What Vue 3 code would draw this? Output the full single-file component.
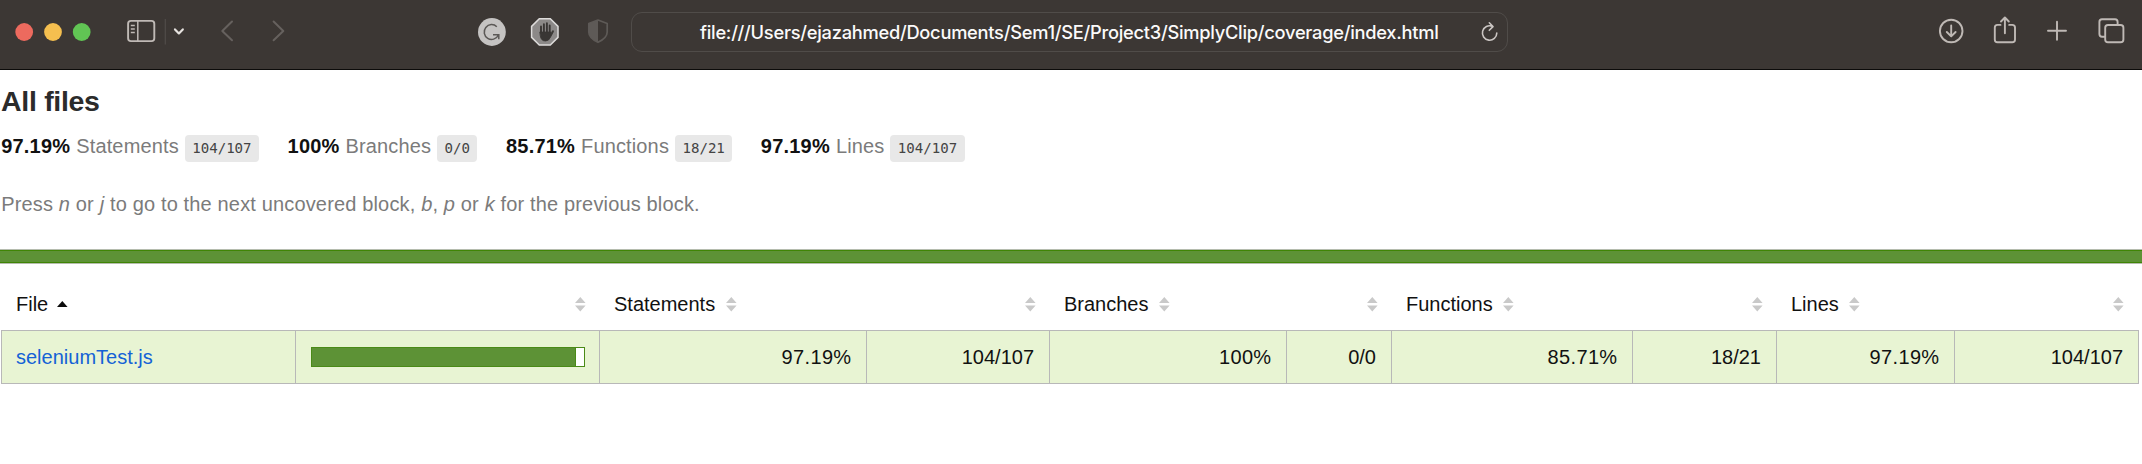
<script setup>
const metrics = [
  { pct: '97.19%', label: 'Statements', ratio: '104/107', key: 'statements' },
  { pct: '100%', label: 'Branches', ratio: '0/0', key: 'branches' },
  { pct: '85.71%', label: 'Functions', ratio: '18/21', key: 'functions' },
  { pct: '97.19%', label: 'Lines', ratio: '104/107', key: 'lines' },
]
const covered = 97
</script>

<template>
  <div class="window">
    <header class="toolbar">
      <div class="group left">
        <svg class="lights" width="80" height="68" viewBox="13 0 80 68">
          <circle cx="24.2" cy="32" r="8.9" fill="#ed6a5e" />
          <circle cx="53" cy="32" r="8.9" fill="#f5bf4f" />
          <circle cx="81.7" cy="32" r="8.9" fill="#61c554" />
        </svg>
        <svg width="64" height="68" viewBox="124 0 64 68" fill="none">
          <rect x="128.1" y="20.9" width="26.2" height="20.2" rx="2.8" stroke="#bfb9b5" stroke-width="1.9" />
          <path d="M137.8 21V41M130.8 25.4h4M130.8 29h4M130.8 32.5h4" stroke="#bfb9b5" stroke-width="1.5" />
          <path d="M165.3 19V44.5" stroke="#514c49" stroke-width="1.2" />
          <path d="M175 29.4L178.9 33.4L182.8 29.4" stroke="#e6e2df" stroke-width="2.2" stroke-linecap="round" stroke-linejoin="round" />
        </svg>
        <svg width="72" height="68" viewBox="217 0 72 68" fill="none" stroke="#66615e" stroke-width="2" stroke-linecap="round" stroke-linejoin="round">
          <path d="M232 21.5L222.3 31L232 40.3" />
          <path d="M273.6 21.5L283.3 31L273.6 40.3" />
        </svg>
      </div>

      <div class="group center">
        <svg width="136" height="68" viewBox="475 0 136 68" fill="none">
          <circle cx="491.9" cy="32" r="13.9" fill="#c5c3c2" />
          <path d="M496.8 26.7A7.4 7.4 0 1 0 498.3 35.2M493 34.7H498.8V39.2" stroke="#5b5856" stroke-width="1.5" />
          <path d="M539.3 18.7H550.3L558 26.4V37.4L550.3 45.1H539.3L531.6 37.4V26.4Z" fill="#8c8988" stroke="#dddbda" stroke-width="1.5" />
          <g stroke="#393634" stroke-linecap="round">
            <path d="M541 33V26.5M543.9 33V24.2M546.9 33V23.3M549.7 33V25.5" stroke-width="1.9" />
            <path d="M540.1 32H550.6V34.5L552.5 30.8Q553.8 30.3 553.5 31.6L550.6 37Q549 41 545.5 41Q541 41 540.3 36Z" fill="#393634" stroke-width="0.8" stroke-linejoin="round" />
          </g>
          <path d="M598 20L607.2 23.5V32Q607.2 38 598 42.3Q588.8 38 588.8 32V23.5Z" stroke="#5e5a57" stroke-width="1.7" stroke-linejoin="round" />
          <path d="M598 20V42.3Q588.8 38 588.8 32V23.5Z" fill="#5e5a57" />
        </svg>
        <div class="address">
          <span class="url">file:///Users/ejazahmed/Documents/Sem1/SE/Project3/SimplyClip/coverage/index.html</span>
          <svg class="reload" width="20" height="36" viewBox="1480 13 20 36" fill="none" stroke="#cbc6c3" stroke-width="1.6" stroke-linecap="round" stroke-linejoin="round">
            <path d="M1496.8 32A7.2 7.2 0 1 1 1492.3 25.3M1489.3 21.8L1493 25.6L1489.3 29.3" />
          </svg>
        </div>
      </div>

      <svg class="actions" width="190" height="68" viewBox="1936 0 190 68" fill="none" stroke="#bfb9b5" stroke-width="1.9" stroke-linecap="round" stroke-linejoin="round">
        <circle cx="1951.2" cy="31" r="11.3" />
        <path d="M1951.2 25.5V36.2M1946.8 32L1951.2 36.4L1955.6 32" />
        <path d="M2000.5 24.9H1997.5Q1994.8 24.9 1994.8 27.5V39.4Q1994.8 42.2 1997.5 42.2H2012.2Q2015 42.2 2015 39.4V27.5Q2015 24.9 2012.2 24.9H2009.2M2004.9 33.2V17.8M2001 21.5L2004.9 17.5L2008.8 21.5" />
        <path d="M2057 21.7V39.8M2048 30.7H2066" />
        <rect x="2105.2" y="25" width="18.2" height="17.3" rx="2.8" />
        <path d="M2104.5 36.7H2102Q2099.4 36.7 2099.4 34V22Q2099.4 19.3 2102 19.3H2115Q2117.6 19.3 2117.6 22V24.5" />
      </svg>
    </header>

    <main class="report">
      <h1>All files</h1>
      <div class="stats">
        <div v-for="m in metrics" :key="m.key" class="stat">
          <strong>{{ m.pct }}</strong>
          <span class="quiet">{{ m.label }}</span>
          <span class="fraction">{{ m.ratio }}</span>
        </div>
      </div>
      <p class="hint">Press <em>n</em> or <em>j</em> to go to the next uncovered block, <em>b</em>, <em>p</em> or <em>k</em> for the previous block.</p>
      <div class="status"></div>

      <div class="row head">
        <div class="th">File<svg class="sorter active" width="11" height="15" viewBox="0 0 11 15"><path d="M0 10L5.3 4L10.6 10Z" fill="#0b0b0b" /></svg></div>
        <div class="th end"><svg class="sorter" width="11" height="15" viewBox="0 0 11 15"><path d="M0 6L5.3 0L10.6 6ZM0 8.5H10.6L5.3 14.5Z" fill="#c9c9c9" /></svg></div>
        <template v-for="m in metrics" :key="m.key">
          <div class="th">{{ m.label }}<svg class="sorter" width="11" height="15" viewBox="0 0 11 15"><path d="M0 6L5.3 0L10.6 6ZM0 8.5H10.6L5.3 14.5Z" fill="#c9c9c9" /></svg></div>
          <div class="th end"><svg class="sorter" width="11" height="15" viewBox="0 0 11 15"><path d="M0 6L5.3 0L10.6 6ZM0 8.5H10.6L5.3 14.5Z" fill="#c9c9c9" /></svg></div>
        </template>
      </div>

      <div class="row body">
        <div class="td"><a class="file">seleniumTest.js</a></div>
        <div class="td pic">
          <div class="chart"><div class="fill" :style="{ width: covered + '%' }"></div></div>
        </div>
        <template v-for="m in metrics" :key="m.key">
          <div class="td num pct">{{ m.pct }}</div>
          <div class="td num">{{ m.ratio }}</div>
        </template>
      </div>
    </main>
  </div>
</template>

<style>
body {
  background: #fff;
}
</style>

<style scoped>
.window {
  width: 2142px;
  height: 464px;
  overflow: hidden;
  background: #fff;
  color: #111;
  font-family: "Liberation Sans", Arial, sans-serif;
  font-size: 20px;
}
svg {
  display: block;
  flex: none;
}
.toolbar {
  box-sizing: border-box;
  height: 70px;
  display: flex;
  justify-content: space-between;
  padding: 0 16px 0 13px;
  background: #3c3734;
  border-bottom: 1.5px solid #0c0b0a;
}
.group {
  display: flex;
}
.left {
  gap: 30px;
}
.left .lights {
  margin-right: 1px;
}
.left svg:last-child {
  margin-left: -1px;
}
.center {
  margin-right: 242px;
  gap: 20px;
}
.address {
  box-sizing: border-box;
  width: 877px;
  height: 40px;
  margin-top: 12px;
  border: 1.5px solid #504c49;
  border-radius: 11px;
  display: flex;
  align-items: center;
  padding: 0 7px 0 68px;
  justify-content: space-between;
}
.url {
  font-family: Inter, sans-serif;
  font-size: 18.3px;
  font-weight: 500;
  letter-spacing: -0.27px;
  color: #fbfafa;
  white-space: nowrap;
}
.report {
  padding-top: 13px;
}
h1 {
  margin: 0 0 0 1px;
  font-size: 28.5px;
  line-height: 36px;
  letter-spacing: -0.3px;
  color: #2b2b2b;
}
.stats {
  display: flex;
  gap: 28.6px;
  margin: 16px 0 0 1.2px;
}
.stat {
  display: flex;
  height: 27px;
  line-height: 23px;
  gap: 6px;
}
.stat strong {
  letter-spacing: 0.2px;
}
.quiet {
  letter-spacing: 0.14px;
  color: #7b7b7b;
}
.fraction {
  box-sizing: border-box;
  height: 27px;
  padding: 0 7.4px;
  border-radius: 4px;
  background: #e8e8e8;
  color: #444;
  font-family: "DejaVu Sans Mono", monospace;
  font-size: 14.1px;
  line-height: 27px;
}
.hint {
  margin: 30px 0 0 1.2px;
  line-height: 24px;
  letter-spacing: 0.155px;
  color: #7b7b7b;
}
.status {
  height: 11px;
  margin-top: 34px;
  background: #5d9236;
  border: solid #3f8505;
  border-width: 1px 0;
  box-shadow: 0 0 0 1px #b5bcae;
}
.row {
  display: grid;
  grid-template-columns: 294px 304px 267px 183px 237px 105px 241px 144px 178px 183px;
  margin-left: 1px;
}
.head {
  height: 67px;
}
.th {
  display: flex;
  align-items: center;
  padding: 15px 13px 0 15px;
}
.sorter {
  margin-left: 10.5px;
}
.sorter.active {
  margin-left: 8.5px;
}
.end {
  justify-content: flex-end;
}
.body {
  width: 2136px;
  height: 52px;
  border: 1px solid #b8b8b8;
  background: #e8f4d3;
}
.td {
  display: flex;
  align-items: center;
  padding: 0 14px;
  border-right: 1px solid #b8b8b8;
}
.td:last-child {
  border-right: 0;
}
.num {
  justify-content: flex-end;
  padding-right: 15px;
}
.pct {
  padding-right: 14.5px;
  letter-spacing: 0.35px;
}
.pic {
  padding-left: 15px;
}
.file {
  color: #1462d6;
}
.chart {
  box-sizing: border-box;
  width: 274px;
  height: 20px;
  border: 1px solid #4a8a17;
  background: #fff;
}
.fill {
  box-sizing: border-box;
  height: 18px;
  background: #5d9236;
  border-right: 1px solid #4a8a17;
}
</style>
